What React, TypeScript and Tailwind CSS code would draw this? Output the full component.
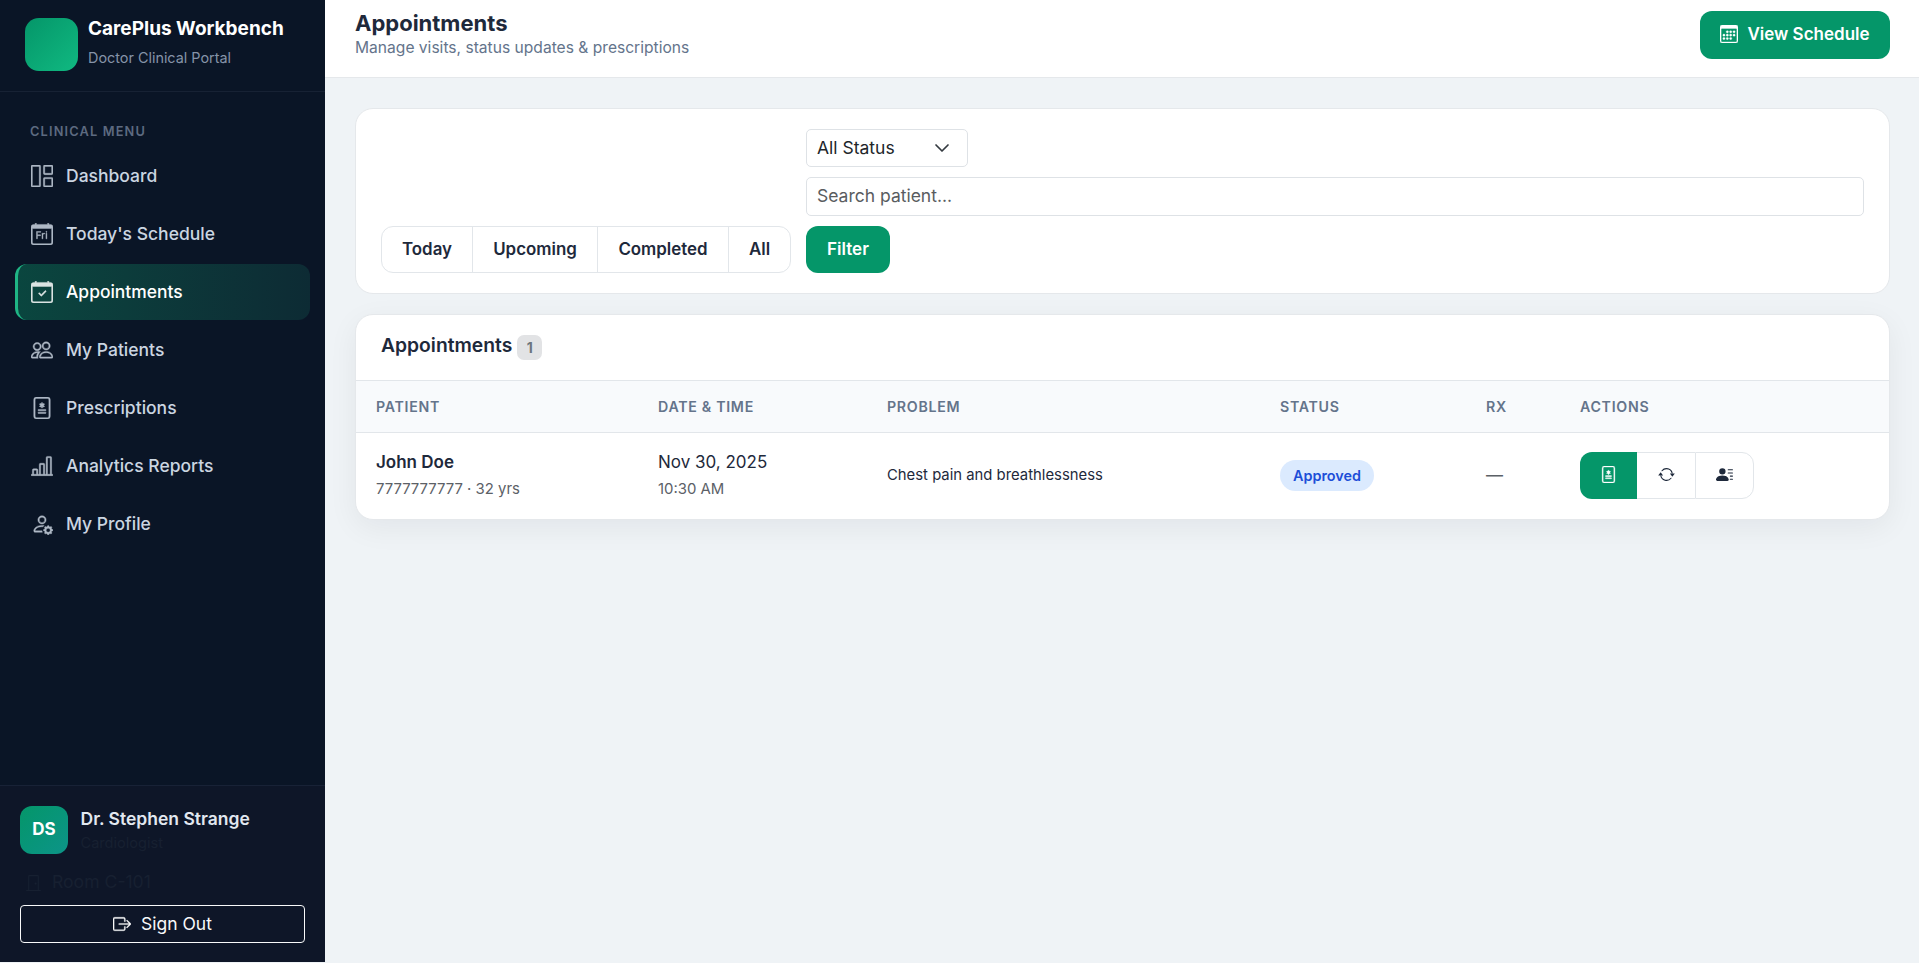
import type { ReactNode } from 'react'
import {
  BsArrowRepeat,
  BsBarChartLine,
  BsBoxArrowRight,
  BsCalendar3,
  BsCalendarCheck,
  BsCalendarDay,
  BsDoorClosed,
  BsFileMedical,
  BsGrid1X2,
  BsPeople,
  BsPersonGear,
  BsPersonLinesFill,
} from 'react-icons/bs'
import type { IconType } from 'react-icons'

type NavItem = {
  label: string
  icon: IconType
  active?: boolean
}

const navItems: NavItem[] = [
  { label: 'Dashboard', icon: BsGrid1X2 },
  { label: "Today's Schedule", icon: BsCalendarDay },
  { label: 'Appointments', icon: BsCalendarCheck, active: true },
  { label: 'My Patients', icon: BsPeople },
  { label: 'Prescriptions', icon: BsFileMedical },
  { label: 'Analytics Reports', icon: BsBarChartLine },
  { label: 'My Profile', icon: BsPersonGear },
]

const ranges = [
  { label: 'Today', width: 'w-[90px]' },
  { label: 'Upcoming', width: 'w-[125px]' },
  { label: 'Completed', width: 'w-[131px]' },
  { label: 'All', width: 'w-[62px]' },
]

const appointments = [
  {
    name: 'John Doe',
    meta: '7777777777 · 32 yrs',
    date: 'Nov 30, 2025',
    time: '10:30 AM',
    problem: 'Chest pain and breathlessness',
    status: 'Approved',
    rx: '—',
  },
]

function Sidebar() {
  return (
    <aside className="flex h-[962px] w-[325px] shrink-0 flex-col bg-[#0a1526]">
      <div className="flex h-[92px] items-start gap-[10px] border-b border-[#172234] pl-[25px] pt-[18px]">
        <div className="h-[53px] w-[53px] rounded-[14px] bg-linear-to-br from-[#059669] to-[#10b981]" />
        <div>
          <div className="text-[19px] font-bold leading-[22px] text-white">CarePlus Workbench</div>
          <div className="mt-[9px] text-[14.4px] leading-[18px] text-[#8593a8]">Doctor Clinical Portal</div>
        </div>
      </div>

      <nav className="flex flex-1 flex-col gap-[2px] px-[15px] pt-[31px]">
        <div className="mb-[5px] pl-[15px] text-[12.8px] font-semibold leading-[18px] tracking-[1.15px] text-[#5d6a80]">
          CLINICAL MENU
        </div>
        {navItems.map(({ label, icon: Icon, active }) => (
          <a
            key={label}
            className={
              active
                ? 'flex h-14 items-center gap-[13px] rounded-xl border-l-[3px] border-[#1fb585] bg-linear-to-r from-[#0a463f] to-[#0d2b34] pl-[13px] text-[17.45px] font-medium text-white'
                : 'flex h-14 items-center gap-[13px] rounded-xl pl-4 text-[17.5px] font-medium text-[#cbd5e1]'
            }
          >
            <Icon strokeWidth={0.3} className="h-[22px] w-[22px] opacity-85" />
            {label}
          </a>
        ))}
      </nav>

      <div className="h-[177px] border-t border-[#182236] bg-[#0e1628] px-5 pt-5">
        <div className="flex gap-[12.5px]">
          <div className="flex h-12 w-12 items-center justify-center rounded-xl bg-linear-to-br from-[#059669] to-[#0d9488] text-[17px] font-bold text-white">
            DS
          </div>
          <div>
            <div className="pt-[2px] text-[17.5px] font-semibold leading-[22px] text-[#e2e8f0]">Dr. Stephen Strange</div>
            <div className="text-[14.6px] leading-[26px] text-[#172031]">Cardiologist</div>
          </div>
        </div>
        <div className="mt-[14px] flex h-[24px] items-center gap-[10px] pl-[5px] text-[17.6px] text-[#172031]">
          <BsDoorClosed className="h-[17px] w-[17px]" />
          Room C-101
        </div>
        <button className="mt-[11px] flex h-[38px] w-[285px] items-center justify-center gap-[10px] rounded-[4px] border border-[#f8f9fa] text-[17.5px] text-[#f8f9fa]">
          <BsBoxArrowRight strokeWidth={0.3} className="h-[18px] w-[18px]" />
          Sign Out
        </button>
      </div>
    </aside>
  )
}

function Th({ children }: { children: ReactNode }) {
  return (
    <th className="pl-5 text-left text-[14.2px] font-semibold tracking-[0.7px] text-[#64748b]">{children}</th>
  )
}

export default function App() {
  return (
    <div className="flex h-[963px] w-full overflow-hidden bg-[#eff3f6] font-['Inter',sans-serif] text-[#1e293b]">
      <Sidebar />

      <div className="min-w-0 flex-1">
        <header className="flex h-[78px] items-start justify-between border-b border-[#e5e8eb] bg-white pl-[30px] pr-[29px] pt-[11px]">
          <div>
            <h1 className="text-[22px] font-bold leading-[24px]">Appointments</h1>
            <p className="text-[15.6px] leading-[26px] text-[#64748b]">Manage visits, status updates &amp; prescriptions</p>
          </div>
          <button className="flex h-12 w-[190px] items-center justify-center gap-[9px] rounded-xl bg-[#059669] text-[17px] font-semibold text-white">
            <BsCalendar3 strokeWidth={0.3} className="mb-[2px] h-[18px] w-[18px]" />
            View Schedule
          </button>
        </header>

        <main className="pl-[30px] pr-[29px] pt-[30px]">
          <section className="flex h-[186px] items-end gap-[15px] rounded-[18px] border border-[#e5e8eb] bg-white px-[25px] pb-[20px]">
            <div className="flex h-[47px] overflow-hidden rounded-xl border border-[#e2e6ea]">
              {ranges.map((range) => (
                <button
                  key={range.label}
                  className={`${range.width} border-l border-[#e2e6ea] pt-px text-[16.9px] font-semibold first:border-l-0`}
                >
                  {range.label}
                </button>
              ))}
            </div>
            <form className="flex flex-1 flex-col items-start gap-[10px]">
              <div className="flex h-[38px] w-[162px] items-center justify-between rounded-[5px] border border-[#dee2e6] pl-[10px] pr-[17px] text-[17.5px] text-[#212529]">
                All Status
                <svg viewBox="0 0 16 16" className="h-4 w-4" fill="none" stroke="#343a40" strokeWidth="1.7" strokeLinecap="round" strokeLinejoin="round">
                  <path d="m2 5 6 6 6-6" />
                </svg>
              </div>
              <input
                placeholder="Search patient..."
                className="h-[39px] w-full rounded-[5px] border border-[#dee2e6] pb-[2px] pl-[10px] text-[17.5px] placeholder:text-[#595c5f]"
              />
              <button className="h-[47px] w-[84px] rounded-xl bg-[#059669] pt-px text-[17px] font-semibold text-white">Filter</button>
            </form>
          </section>

          <section className="mt-[20px] overflow-hidden rounded-[18px] border border-[#e5e8eb] bg-white shadow-[0_8px_30px_rgba(15,23,42,0.06)]">
            <div className="flex h-[65px] items-start gap-[5px] pl-[25px] pt-[20px]">
              <h2 className="-mt-px text-[19.3px] font-semibold leading-[22px]">Appointments</h2>
              <span className="flex h-[25px] w-[25px] items-center justify-center rounded-[7px] bg-[#e2e3e5] text-[14px] font-bold text-[#6c757d]">
                1
              </span>
            </div>
            <table className="w-full table-fixed border-collapse">
              <colgroup>
                <col className="w-[282px]" />
                <col className="w-[229px]" />
                <col className="w-[393px]" />
                <col className="w-[206px]" />
                <col className="w-[94px]" />
                <col />
              </colgroup>
              <thead>
                <tr className="h-[52px] border-y border-[#e2e6ea] bg-[#f8fafc]">
                  <Th>PATIENT</Th>
                  <Th>DATE &amp; TIME</Th>
                  <Th>PROBLEM</Th>
                  <Th>STATUS</Th>
                  <Th>RX</Th>
                  <Th>ACTIONS</Th>
                </tr>
              </thead>
              <tbody>
                {appointments.map((row) => (
                  <tr key={row.name} className="h-[86px]">
                    <td className="pl-5 pt-[2px]">
                      <div className="text-[17px] font-semibold leading-[25px]">{row.name}</div>
                      <div className="text-[14.9px] leading-[28px] text-[#5c6167]">{row.meta}</div>
                    </td>
                    <td className="pl-5 pt-[2px]">
                      <div className="text-[17px] leading-[25px]">{row.date}</div>
                      <div className="text-[14.9px] leading-[28px] text-[#5c6167]">{row.time}</div>
                    </td>
                    <td className="pb-px pl-5 text-[14.85px]">{row.problem}</td>
                    <td className="pl-5">
                      <span className="flex h-[31px] w-[94px] items-center justify-center rounded-full bg-[#dbeafe] text-[14.4px] font-semibold text-[#1d4ed8]">
                        {row.status}
                      </span>
                    </td>
                    <td className="pl-5 text-[17px] text-[#5c6167]">{row.rx}</td>
                    <td className="pb-px pl-5">
                      <div className="flex h-[47px] w-[174px]">
                        <button className="flex w-[57px] items-center justify-center rounded-l-xl bg-[#059669] pb-px text-white">
                          <BsFileMedical strokeWidth={0.3} className="h-[17px] w-[17px]" />
                        </button>
                        <button className="flex w-[58px] items-center justify-center border-y border-[#e2e6ea] pb-px">
                          <BsArrowRepeat className="h-[17px] w-[17px]" />
                        </button>
                        <button className="flex w-[59px] items-center justify-center rounded-r-xl border border-[#e2e6ea] pb-px">
                          <BsPersonLinesFill className="h-[17px] w-[17px]" />
                        </button>
                      </div>
                    </td>
                  </tr>
                ))}
              </tbody>
            </table>
          </section>
        </main>
      </div>
    </div>
  )
}
